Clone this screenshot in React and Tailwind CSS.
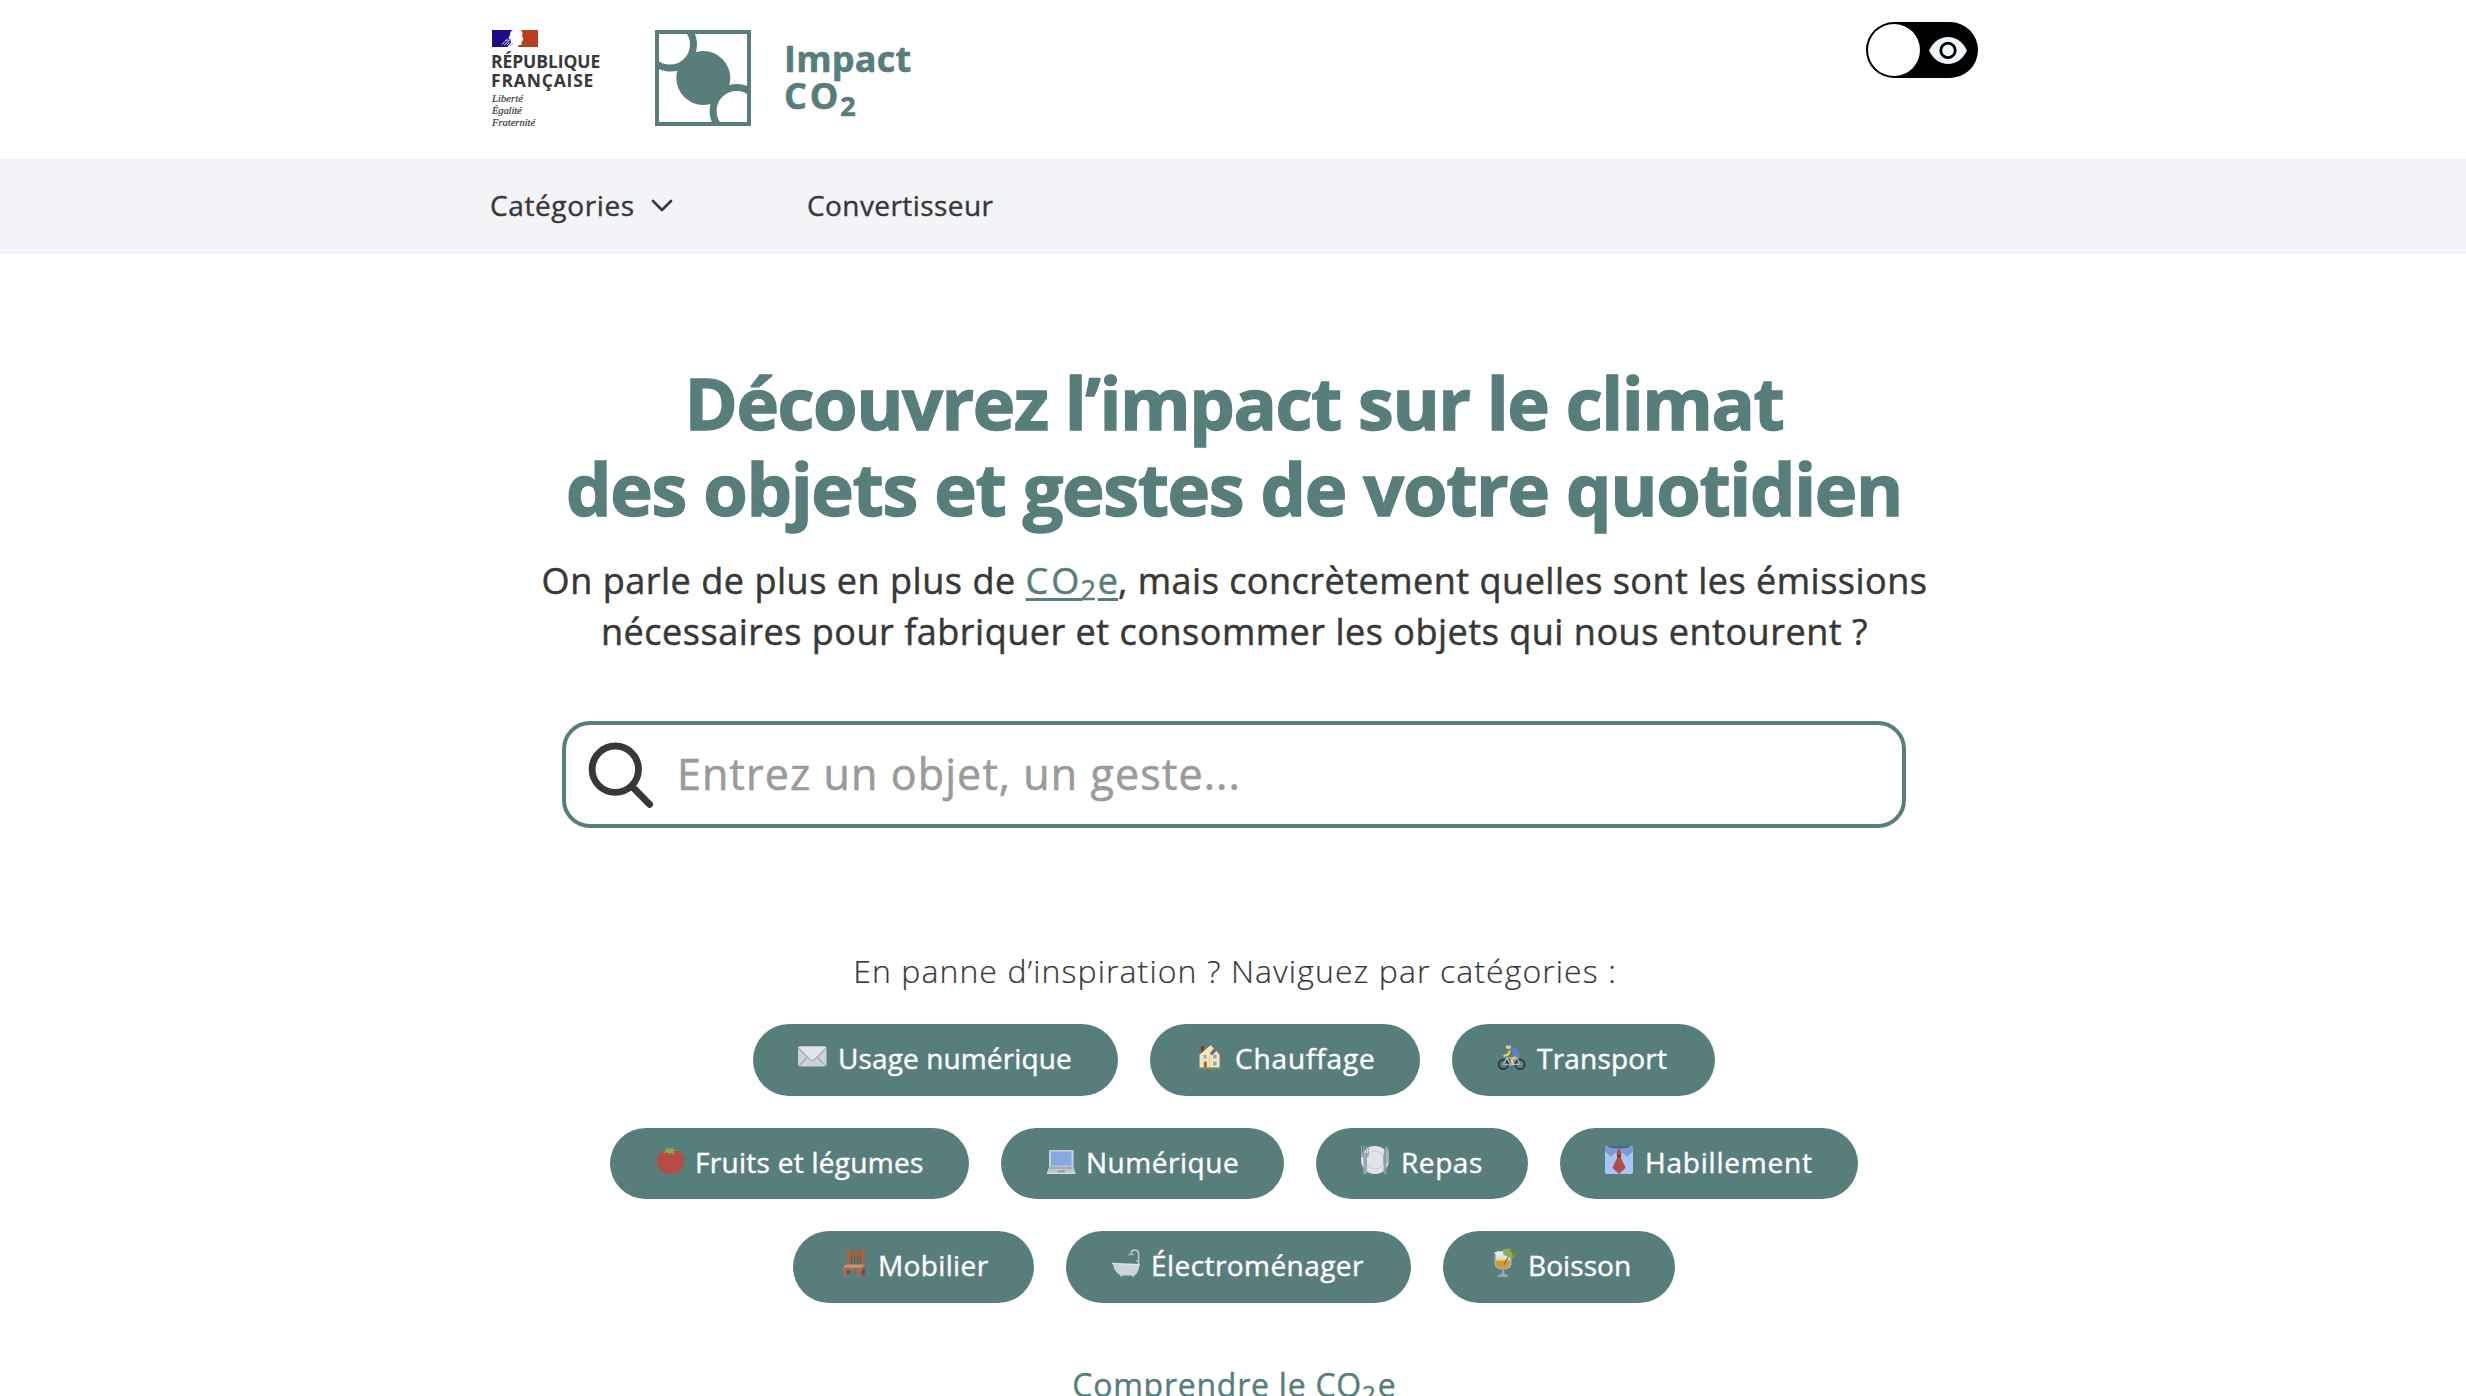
import React from "react";

const Envelope = () => (
  <>
    <rect x="0" y="4.5" width="28.5" height="20" rx="2" fill="#ccd1da" />
    <path d="M1.2 23.6 10.4 14M27.3 23.6 18 14" stroke="#9ba4b2" strokeWidth="1.1" />
    <path d="M.4 5.8Q1 4.5 2.4 4.5H26.2Q27.8 4.5 28.1 5.8L16.5 17.6Q14.3 19.6 12 17.6Z" fill="#e2e5ea" />
    <path d="M.6 6.2 12 17.7Q14.3 19.7 16.5 17.7L28 6.2" fill="none" stroke="#9ba4b2" strokeWidth="1.1" />
  </>
);
const House = () => (
  <>
    <rect x="6" y="4" width="3" height="7" fill="#7c3a36" />
    <path d="M4.6 12.6 15.5 3 21 8.2 24.6 13V26H4.6Z" fill="#f4e6b9" />
    <path d="M4.3 12.4 15.5 2.8 19 6 14.8 12" fill="none" stroke="#8a6a66" strokeWidth=".6" />
    <path d="M15 11.8 19.6 6.6l2 2L17 13.2Z" fill="#6b5f6d" />
    <path d="M14.6 13V26" stroke="#e3c878" strokeWidth="1" />
    <rect x="3" y="25.4" width="24" height="1.8" fill="#6f9150" />
    <rect x="8.8" y="19.6" width="3" height="6" fill="#9d5f44" />
    <path d="M8.6 13h3v3.6h-3zM18 12.6h3.6v3.8H18zM18 19.8h3.6v3.6H18z" fill="#84a8e2" />
  </>
);
const Cyclist = () => (
  <>
    <g fill="none" stroke="#2d3238" strokeWidth="1.7">
      <circle cx="6.3" cy="22.4" r="4.7" />
      <circle cx="23" cy="22.4" r="4.7" />
    </g>
    <path d="M6.3 22.4 10 15.6h10L14.6 23Zm3.4-6.4 4.6 7M19.8 15.4 23 22.4h-7" fill="none" stroke="#a9b2be" strokeWidth="1.2" />
    <path d="M11.6 6.6Q18 3.6 22.4 8.4q2 4.6-.2 7.2l-5.6.2-2.4-2.4 1.4-3Z" fill="#5f80bd" />
    <path d="M12.6 9.6 11 12.6 7.4 13.8M18 15.4l-3.2 2 .8 5" fill="none" stroke="#f2ce58" strokeWidth="2.2" strokeLinecap="round" />
    <circle cx="11.4" cy="4.4" r="2.6" fill="#f2ce58" />
    <path d="M8 3.6Q8.4.4 11.4.4q3 .2 3 3.4Z" fill="#5473b5" />
    <path d="M14.4 23.4h3.4v2.6h-3.4z" fill="#4b70bd" />
  </>
);
const Tomato = () => (
  <>
    <path d="M2 15.4C2 6.6 7.4 4 15.6 4S29 7.4 29 15.4 23 28 15.6 28 2 24 2 15.4Z" fill="#b54c46" />
    <path d="m7.6 1.8 4 2.4L11 .4l3.4 2.8L18.6.6l-1 3 4.4.2-3.6 1.8 1 3-3.8-1.8-2.4 1.4-.6-2-4.6 1 2.8-2.6Z" fill="#88ab57" />
  </>
);
const Laptop = () => (
  <>
    <rect x="3" y="4" width="24.6" height="17" rx="1.4" fill="#c9ced6" />
    <rect x="5" y="5.6" width="20.6" height="14" fill="#86a9e6" />
    <path d="M3.4 20h24l2 6.4v1.4H1v-1.4Z" fill="#bfc5ce" />
    <path d="M4.6 20.8h21.6l.8 2.2H4Z" fill="#a4abb6" />
    <path d="M12 24.4h7l.5 2h-8Z" fill="#8b939f" />
    <path d="M1 26.6h28.4v1.4H1z" fill="#d9dde2" />
  </>
);
const Plate = () => (
  <>
    <circle cx="14" cy="14" r="14" fill="#e1e4e9" />
    <circle cx="14" cy="14" r="9" fill="none" stroke="#cbd0d8" strokeWidth="1.2" />
    <path d="M0 0h1v7h1.4V0h1.2v7H5V0h1v7h1.2V0h.8v8.4Q8 10.6 6 11.4V28H2.4V11.4Q0 10.6 0 8.4Z" fill="#9aa4b2" />
    <path d="M25.4 0v28h-2.8V18q-.6-1-.4-4C22.6 6 23.4 1.4 25.4 0Z" fill="#8f9aa9" />
    <path d="M25.4 0q2.4 3 2.6 9.6v8h-2.6z" fill="#a6afbc" />
  </>
);
const Shirt = () => (
  <>
    <rect width="28" height="28" rx="2.6" fill="#a8c6f5" />
    <path d="M0 2.6Q0 .4 2.4.4h23.2Q28 .4 28 2.6v2.6l-5.8 5.6L14 3.4l-8.2 7.4L0 5.2Z" fill="#789bd0" />
    <path d="M2.6 0h22.8q-1.4 2.4-11.4 2.4T2.6 0Z" fill="#42619d" />
    <path d="m14 2.4 2.6 4.4-1 4.4 5 10.6L14 28l-6.6-6.2 5-10.6-1-4.4Z" fill="#b44b45" />
    <path d="M11.8 9h4.4l-.6 2.4h-3.2Z" fill="#8d2f31" />
  </>
);
const Chair = () => (
  <>
    <path d="M9 19h3v6H9zM23.6 18h3v8.6h-3z" fill="#7f4a34" />
    <path d="M9 .4 11.8 0 12 17H9ZM23.6 0l3 .4V17h-3Z" fill="#a86446" />
    <rect x="12" y="1.8" width="12" height="6.4" fill="#a0603f" />
    <path d="M13.6 8v8M16.6 8v8M19.6 8v8M22.4 8v8" stroke="#884f36" strokeWidth="1.2" />
    <path d="M8 15.6h19l-3.4 3.6H4.4Z" fill="#c39376" />
    <path d="M4.4 18.8h19.2l3.2-3v2l-3 3.6H4.4Z" fill="#a8674a" />
    <path d="M5 20h3.2v8H5.6zM19.2 20h3.2v8h-2.8z" fill="#ad6b4c" />
  </>
);
const Bath = () => (
  <>
    <path d="M27.6 15V4.6Q27.4 1 23.8 1q-3.4 0-3.6 3.4" fill="none" stroke="#c3c9d2" strokeWidth="1.6" />
    <path d="M17.4 4.8h5.4v1.4h-5.4zM25 11h3v1.4h-3z" fill="#b1b9c5" />
    <path d="M8.8 25.6h3l-.6 2.4H9.4zM20.6 25.6h3L23 28h-2z" fill="#a8b0bd" />
    <path d="M2 15.6h26.2Q28.4 23 23.4 26.6H9.6Q3.6 23.8 2 15.6Z" fill="#cfd3dc" />
    <path d="M1 13.8 28.8 15v1.6L1.4 15.6Z" fill="#dfe2e8" />
  </>
);
const Drink = () => (
  <>
    <path d="M6.4 3.6h17.2V14q0 5.6-6 6.4h-5q-6-.6-6.2-6.4Z" fill="#a9adb3" />
    <path d="M8 4h14v6.4H8z" fill="#dfe2e5" />
    <path d="M8 10h14v4.4q-.4 4.2-5 4.6h-4q-4.6-.6-5-4.6Z" fill="#d39a35" />
    <path d="M8 9.8h14v2H8z" fill="#ecd06b" />
    <ellipse cx="15" cy="4" rx="8.4" ry="2" fill="#eceef0" />
    <path d="M21 6.4 16.2 15.6" stroke="#8e5a3a" strokeWidth="1.1" />
    <path d="M14.4.8Q21-1.6 25.6 2q2.8 2.8 2.2 6.6l-5-.4L15.6 6Z" fill="#8aad58" />
    <path d="M22 .4 26 8.4l1.6.2Q28.4 3 24 1Z" fill="#5d8440" />
    <path d="M14 20h2.2v4.2l4.2 2.2q.8 1.6-.8 1.6h-9q-1.4 0-.8-1.6l4.2-2.2Z" fill="#9ba2aa" />
  </>
);

const ROWS = [
  [
    { label: "Usage numérique", Icon: Envelope, box: "w-[365px]", text: "tracking-[0.0043em]" },
    { label: "Chauffage", Icon: House, box: "w-[270px]", text: "tracking-[0.0306em]" },
    { label: "Transport", Icon: Cyclist, box: "w-[263px]", text: "tracking-[0.0073em]" },
  ],
  [
    { label: "Fruits et légumes", Icon: Tomato, box: "w-[359px]", text: "tracking-[0.01em]" },
    { label: "Numérique", Icon: Laptop, box: "w-[283px]", text: "tracking-[0.0191em]" },
    { label: "Repas", Icon: Plate, box: "w-[212px]", text: "tracking-[0.0206em]" },
    { label: "Habillement", Icon: Shirt, box: "w-[298px]", text: "tracking-[0.0283em]" },
  ],
  [
    { label: "Mobilier", Icon: Chair, box: "w-[241px]", text: "tracking-[0.013em]" },
    { label: "Électroménager", Icon: Bath, box: "w-[345px]", text: "tracking-[0.0155em]" },
    { label: "Boisson", Icon: Drink, box: "w-[232px]", text: "tracking-[0.0028em]" },
  ],
];

function Republique() {
  return (
    <div className="w-[163px] pt-[30px]">
      <svg className="block" width="46" height="17" viewBox="0 0 46 17">
        <path d="M0 0H21L18.6 1.6 18 5 16.4 8 18.6 9.6 19 13 16 16 15.4 17H0Z" fill="#1f0a8c" />
        <path d="M29 0H46V17H26V15.4L30 14.4 29.4 12.4 31.4 9 30 6 30.6 3Z" fill="#b93f23" />
        <path d="M10 14.6 13 11.4M12.4 15 18 9.6M13 10.4 16.4 9.8M15.4 14.8 17.6 12.6" stroke="#fff" strokeWidth="1" fill="none" />
        <path d="M18 15.6 21 13.6M17.6 2.4 19.4 1.4" stroke="#777" strokeWidth=".8" />
      </svg>
      <div className="mt-[5px] -ml-px text-[17.5px] leading-[18.7px] font-bold">
        <div className="tracking-[-0.005em]">RÉPUBLIQUE</div>
        <div className="tracking-[0.0463em]">FRANÇAISE</div>
      </div>
      <div className="mt-[4px] font-['Liberation_Serif',serif] text-[10.5px] leading-[11.8px] italic [-webkit-text-stroke:0.2px]">
        <div className="tracking-[0.01em]">Liberté</div>
        <div className="tracking-[-0.01em]">Égalité</div>
        <div>Fraternité</div>
      </div>
    </div>
  );
}

function Logo() {
  return (
    <svg className="mt-[30px] shrink-0" width="96" height="96" viewBox="0 0 96 96">
      <clipPath id="logo-frame">
        <rect width="96" height="96" />
      </clipPath>
      <g clipPath="url(#logo-frame)" fill="#fff" stroke="#587e7c">
        <circle cx="48.3" cy="48" r="27" fill="#587e7c" stroke="none" />
        <circle cx="15" cy="14.6" r="23.5" strokeWidth="7" />
        <circle cx="81.6" cy="81" r="23.5" strokeWidth="7" />
        <rect x="2" y="2" width="92" height="92" fill="none" strokeWidth="4" />
      </g>
    </svg>
  );
}

export default function App() {
  return (
    <div className="h-[1396px] w-full overflow-hidden bg-white font-['Open_Sans',sans-serif] text-[#383838]">
      <header className="mx-auto flex h-[158px] w-[1490px] items-start pl-[4px]">
        <Republique />
        <Logo />
        <div className="ml-[33px] pt-[40px] text-[36px] leading-[37.3px] font-bold text-[#587e7c] [-webkit-text-stroke:0.6px]">
          <div className="tracking-[0.006em]">Impact</div>
          <div>
            <span className="tracking-[0.08em]">CO</span>
            <span className="relative top-[7px] -ml-[1px] text-[27px] leading-none">2</span>
          </div>
        </div>
        <button className="mt-[22px] ml-auto flex h-[56px] w-[112px] items-center rounded-full bg-black pl-[2px]">
          <span className="size-[52px] rounded-full bg-white" />
          <svg className="ml-[9px]" width="38" height="27" viewBox="0 0 38 27">
            <path d="M0 13.5C4 5 11 0 19 0s15 5 19 13.5C34 22 27 27 19 27S4 22 0 13.5Z" fill="#eef6f9" />
            <circle cx="19" cy="13.4" r="7.2" fill="#eef6f9" stroke="#000" strokeWidth="2.8" />
          </svg>
        </button>
      </header>

      <nav className="h-[96px] bg-[#f3f4f8]">
        <div className="mx-auto flex h-full w-[1490px] items-center pb-[3px] pl-[2px] text-[28px] font-medium [-webkit-text-stroke:0.4px]">
          <a className="flex w-[317px] items-center gap-[16px] pt-[1px]">
            <span className="tracking-[0.022em]">Catégories</span>
            <svg className="mt-[2px]" width="22" height="14" viewBox="0 0 22 14" fill="none" stroke="#383838" strokeWidth="2.6" strokeLinecap="round" strokeLinejoin="round">
              <path d="M2 2 11 11 20 2" />
            </svg>
          </a>
          <a className="tracking-[0.0151em]">Convertisseur</a>
        </div>
      </nav>

      <main className="flex flex-col items-center pt-[105px] pl-[2px] whitespace-nowrap">
        <h1 className="text-center text-[72px] leading-[86px] font-bold text-[#587e7c] [-webkit-text-stroke:1.4px]">
          <div className="tracking-[-0.0201em]">Découvrez l’impact sur le climat</div>
          <div className="tracking-[-0.0187em]">des objets et gestes de votre quotidien</div>
        </h1>
        <p className="mt-[24px] pl-px text-center text-[36px] leading-[51px] font-medium [-webkit-text-stroke:0.5px]">
          <span className="tracking-[0.0148em]">On parle de plus en plus de </span>
          <a className="text-[#587e7c]">
            <span className="tracking-[0.085em] underline decoration-[2.5px] underline-offset-[4px]">CO</span>
            <span className="relative top-[6px] -ml-[2px] text-[27px] leading-none">2</span>
            <span className="ml-[2px] underline decoration-[2.5px] underline-offset-[4px]">e</span>
          </a>
          <span className="tracking-[0.0137em]">, mais concrètement quelles sont les émissions</span>
          <br />
          <span className="tracking-[0.0143em]">nécessaires pour fabriquer et consommer les objets qui nous entourent ?</span>
        </p>

        <label className="mt-[64px] flex h-[107px] w-[1344px] items-center rounded-[28px] border-4 border-[#587e7c] pl-[22px]">
          <svg className="shrink-0" width="66" height="68" viewBox="0 0 66 68" fill="none" stroke="#383838">
            <circle cx="27.3" cy="28.2" r="23.2" strokeWidth="6.8" />
            <path d="M45 46.5 61.6 63.4" strokeWidth="6.8" strokeLinecap="round" />
          </svg>
          <input
            className="ml-[23px] w-[1100px] text-[43px] font-medium tracking-[0.026em] outline-none [-webkit-text-stroke:0.6px] placeholder:text-[#9b9b9b]"
            placeholder="Entrez un objet, un geste..."
          />
        </label>

        <p className="mt-[119px] pl-[2px] text-[32px] leading-[48px] font-light tracking-[0.0339em] [-webkit-text-stroke:0.2px]">
          En panne d’inspiration ? Naviguez par catégories :
        </p>
        <div className="mt-[29px] flex flex-col gap-[32px]">
          {ROWS.map((row, i) => (
            <div key={i} className="flex justify-center gap-[32px]">
              {row.map(({ label, Icon, box, text }) => (
                <a key={label} className={`flex h-[71.5px] items-center rounded-full bg-[#587e7c] pb-[3px] pl-[45px] text-[28px] font-medium text-white [-webkit-text-stroke:0.4px] ${box}`}>
                  <svg className="mb-[4px] shrink-0 overflow-visible" width="28" height="28" viewBox="0 0 28 28">
                    <Icon />
                  </svg>
                  <span className={`ml-[12px] ${text}`}>{label}</span>
                </a>
              ))}
            </div>
          ))}
        </div>
        <a className="mt-[58px] text-[32px] leading-[48px] font-medium text-[#587e7c] [-webkit-text-stroke:0.4px]">
          <span className="tracking-[0.0235em]">Comprendre le CO</span>
          <span className="relative top-[6px] text-[24px] leading-none">2</span>
          <span className="ml-[2px]">e</span>
        </a>
      </main>
    </div>
  );
}
